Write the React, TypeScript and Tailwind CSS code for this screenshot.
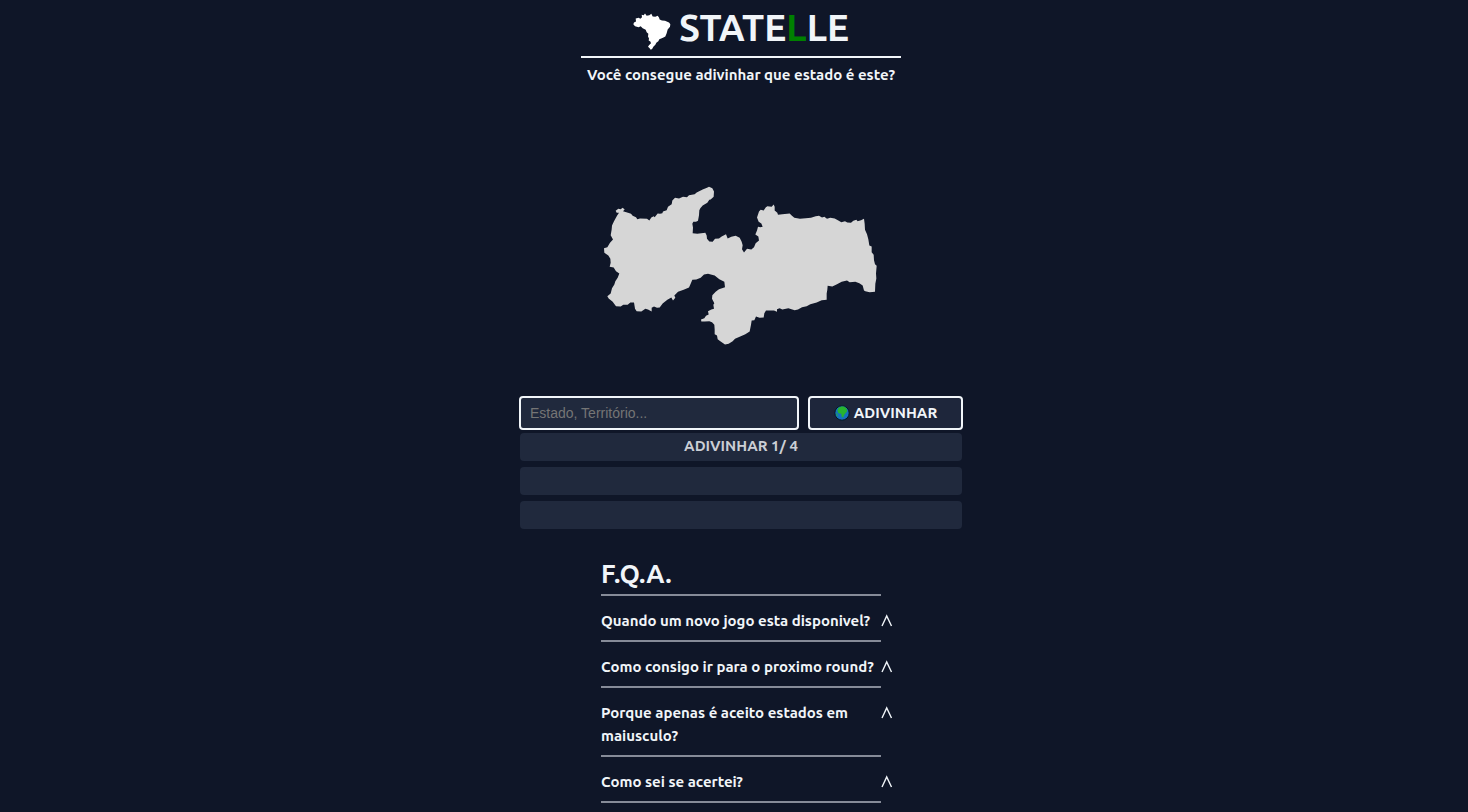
import { useState } from "react";
import type { FormEvent } from "react";

const questions = [
  { q: "Quando um novo jogo esta disponivel?", a: "Todos os dias." },
  { q: "Como consigo ir para o proximo round?", a: "Acertando o estado." },
  { q: "Porque apenas é aceito estados em maiusculo?", a: "Para facilitar a comparação." },
  { q: "Como sei se acertei?", a: "O nome do estado aparece na lista." },
];

function BrazilIcon() {
  return (
    <svg viewBox="0 0 114 110" className="h-[37px] w-[38px] shrink-0" fill="#fff" aria-hidden="true">
      <path d="M36 1 L41 8 L49 6 L55 2 L59 10 L67 11 L74 8 L78 13 L80 19 L87 22 L96 23 L108 28 L112 33 L111 41 L104 49 L101 60 L97 70 L90 74 L79 78 L76 84 L70 89 L67 95 L61 101 L57 108 L52 109 L50 105 L45 101 L48 96 L54 90 L52 85 L47 82 L48 76 L45 70 L46 62 L41 57 L38 50 L29 45 L23 39 L17 42 L6 39 L1 33 L3 28 L9 25 L8 16 L17 14 L22 17 L27 12 L26 5 L32 6 Z" />
    </svg>
  );
}

function StateMap() {
  return (
    <svg viewBox="38 32 822 476" className="h-[159px] w-[274px]" fill="#d6d6d6" role="img" aria-label="Mapa do estado">
      <path d="M76 106 L84 100 L91 101 L97 97 L103 102 L98 107 L113 112 L122 115 L127 121 L137 125 L141 131 L149 129 L170 130 L177 135 L183 126 L190 122 L193 125 L202 114 L209 115 L216 113 L218 108 L229 104 L233 94 L244 86 L246 75 L254 67 L266 69 L278 64 L290 65 L296 59 L313 56 L319 51 L337 42 L350 37 L356 34 L366 38 L371 48 L370 64 L361 72 L357 73 L351 82 L337 90 L330 98 L327 104 L326 119 L323 136 L317 139 L309 139 L306 145 L308 156 L307 173 L321 175 L345 172 L349 180 L350 190 L357 198 L367 199 L374 190 L386 189 L394 183 L407 176 L412 189 L423 184 L436 181 L448 187 L454 199 L457 209 L455 221 L461 231 L470 220 L483 222 L491 215 L496 203 L506 195 L504 183 L495 177 L500 165 L503 154 L510 155 L517 154 L513 144 L505 139 L500 126 L506 108 L511 103 L520 105 L526 96 L531 92 L544 94 L550 87 L553 94 L553 105 L561 112 L563 118 L576 116 L591 115 L598 114 L604 120 L612 127 L629 130 L646 128 L662 127 L676 122 L686 121 L695 126 L702 124 L710 130 L720 127 L733 129 L744 135 L753 140 L764 137 L771 141 L782 142 L789 136 L798 133 L802 137 L812 134 L821 130 L823 145 L824 163 L830 176 L834 191 L837 210 L844 213 L844 230 L850 238 L851 254 L854 266 L859 271 L857 294 L858 309 L855 325 L854 349 L838 350 L825 347 L821 345 L817 330 L807 323 L795 319 L778 320 L770 315 L754 319 L740 326 L726 333 L712 331 L711 343 L709 354 L709 373 L694 374 L679 381 L660 386 L649 392 L635 395 L623 402 L613 404 L594 398 L576 402 L568 398 L560 401 L560 409 L551 405 L527 405 L522 413 L520 426 L508 427 L497 423 L492 434 L484 435 L482 448 L478 468 L465 476 L448 484 L434 490 L427 497 L415 505 L404 507 L391 498 L382 491 L380 480 L373 476 L373 462 L372 448 L365 440 L357 437 L343 438 L333 438 L332 432 L342 428 L347 421 L355 417 L353 407 L363 402 L371 400 L369 388 L372 383 L365 370 L366 359 L376 349 L386 341 L404 335 L402 319 L387 311 L373 300 L353 295 L341 297 L331 307 L318 312 L306 313 L301 325 L296 336 L280 343 L263 349 L252 360 L255 367 L248 375 L243 366 L231 373 L217 384 L208 396 L200 397 L191 393 L184 397 L184 408 L173 402 L165 400 L153 408 L139 407 L134 400 L131 381 L120 381 L112 388 L99 388 L91 393 L77 392 L67 379 L55 369 L51 362 L61 354 L65 338 L72 327 L75 317 L82 307 L87 294 L77 287 L70 276 L58 274 L61 262 L60 250 L54 240 L42 232 L41 218 L51 215 L59 202 L68 192 L61 179 L64 162 L65 150 L71 137 L80 121 L86 112 L79 112 Z" />
    </svg>
  );
}

function Globe() {
  return (
    <svg viewBox="0 0 16 16" className="size-4 shrink-0" aria-hidden="true">
      <circle cx="8" cy="8" r="7.2" fill="#1672bd" stroke="#061a26" strokeWidth="1" />
      <path d="M4.2 3.2 C5.5 1.7 8 1.1 10 1.6 L12.6 3.5 L13.2 6.3 L11.5 8.2 L10.3 9.7 L9 12.8 L7.6 11.5 L7.3 8.8 L4.5 8.2 L3.4 5.8 Z" fill="#27b52f" />
      <path d="M2 7.5 L4 10 L3.6 12 C2.4 10.9 1.7 9.3 2 7.5 Z" fill="#1d9a68" />
    </svg>
  );
}

export default function App() {
  const [guess, setGuess] = useState("");
  const [guesses, setGuesses] = useState<string[]>([]);
  const [open, setOpen] = useState<number | null>(null);

  const submit = (e: FormEvent) => {
    e.preventDefault();
    if (!guess.trim() || guesses.length >= 3) return;
    setGuesses([...guesses, guess.trim()]);
    setGuess("");
  };

  return (
    <div className="flex min-h-screen flex-col items-center bg-[#0f1628] pl-3.5 font-['Ubuntu','Noto_Sans',sans-serif] text-[15px] font-semibold text-slate-100">
      <header className="flex w-full max-w-80 flex-col items-center">
        <div className="flex h-14 w-full items-center justify-center gap-2 pt-1.5">
          <BrazilIcon />
          <h1 className="pb-[7px] text-[37px] leading-[48px]">
            STATE<span className="text-[#008000]">L</span>LE
          </h1>
        </div>
        <p className="w-full border-t-2 border-slate-100 pt-[5px] text-center leading-6 whitespace-nowrap">
          Você consegue adivinhar que estado é este?
        </p>
      </header>

      <main className="flex w-full flex-col items-center">
        <div className="flex h-[309px] items-center justify-center pt-12 pr-0.5">
          <StateMap />
        </div>

        <section className="flex w-full max-w-[444px] flex-col">
          <form onSubmit={submit} className="flex gap-[9px]">
            <input
              aria-label="Estado"
              placeholder="Estado, Território..."
              value={guess}
              onChange={(e) => setGuess(e.target.value)}
              className="h-[34px] min-w-0 flex-1 rounded border-2 border-slate-100 bg-[#20293d] px-[9px] font-['Liberation_Sans',sans-serif] text-sm font-normal placeholder:text-[#757575]"
            />
            <button
              type="submit"
              className="flex h-[34px] w-[155px] items-center justify-center gap-1 rounded border-2 border-slate-100 bg-[#1e263b]"
            >
              <Globe />
              ADIVINHAR
            </button>
          </form>
          <ul className="flex flex-col gap-1.5 px-px pt-[3px] text-center leading-[26px] text-[#cbced4]">
            <li className="h-7 rounded bg-[#20293d]">{guesses[0] ?? "ADIVINHAR 1/ 4"}</li>
            <li className="h-7 rounded bg-[#20293d]">{guesses[1]}</li>
            <li className="h-7 rounded bg-[#20293d]">{guesses[2]}</li>
          </ul>
        </section>

        <section className="w-full max-w-70 pt-[27px]">
          <h2 className="border-b-2 border-[#868b98] pb-0.5 text-[26px] leading-9">F.Q.A.</h2>
          {questions.map((item, i) => (
            <div key={item.q} className="border-b-2 border-[#868b98] pt-[13px] pb-2">
              <button
                type="button"
                aria-expanded={open === i}
                onClick={() => setOpen(open === i ? null : i)}
                className="-mr-4 flex w-74 items-start text-left leading-[23px]"
              >
                <span className="w-70 shrink-0">{item.q}</span>
                <svg viewBox="0 0 12 22" className="h-[22px] w-3 shrink-0" fill="none" stroke="currentColor" strokeWidth="1.4" aria-hidden="true">
                  <path d="M1 17 L5.7 7 L10.5 17" />
                </svg>
              </button>
              {open === i && <p className="pt-2 font-normal">{item.a}</p>}
            </div>
          ))}
        </section>
      </main>
    </div>
  );
}
